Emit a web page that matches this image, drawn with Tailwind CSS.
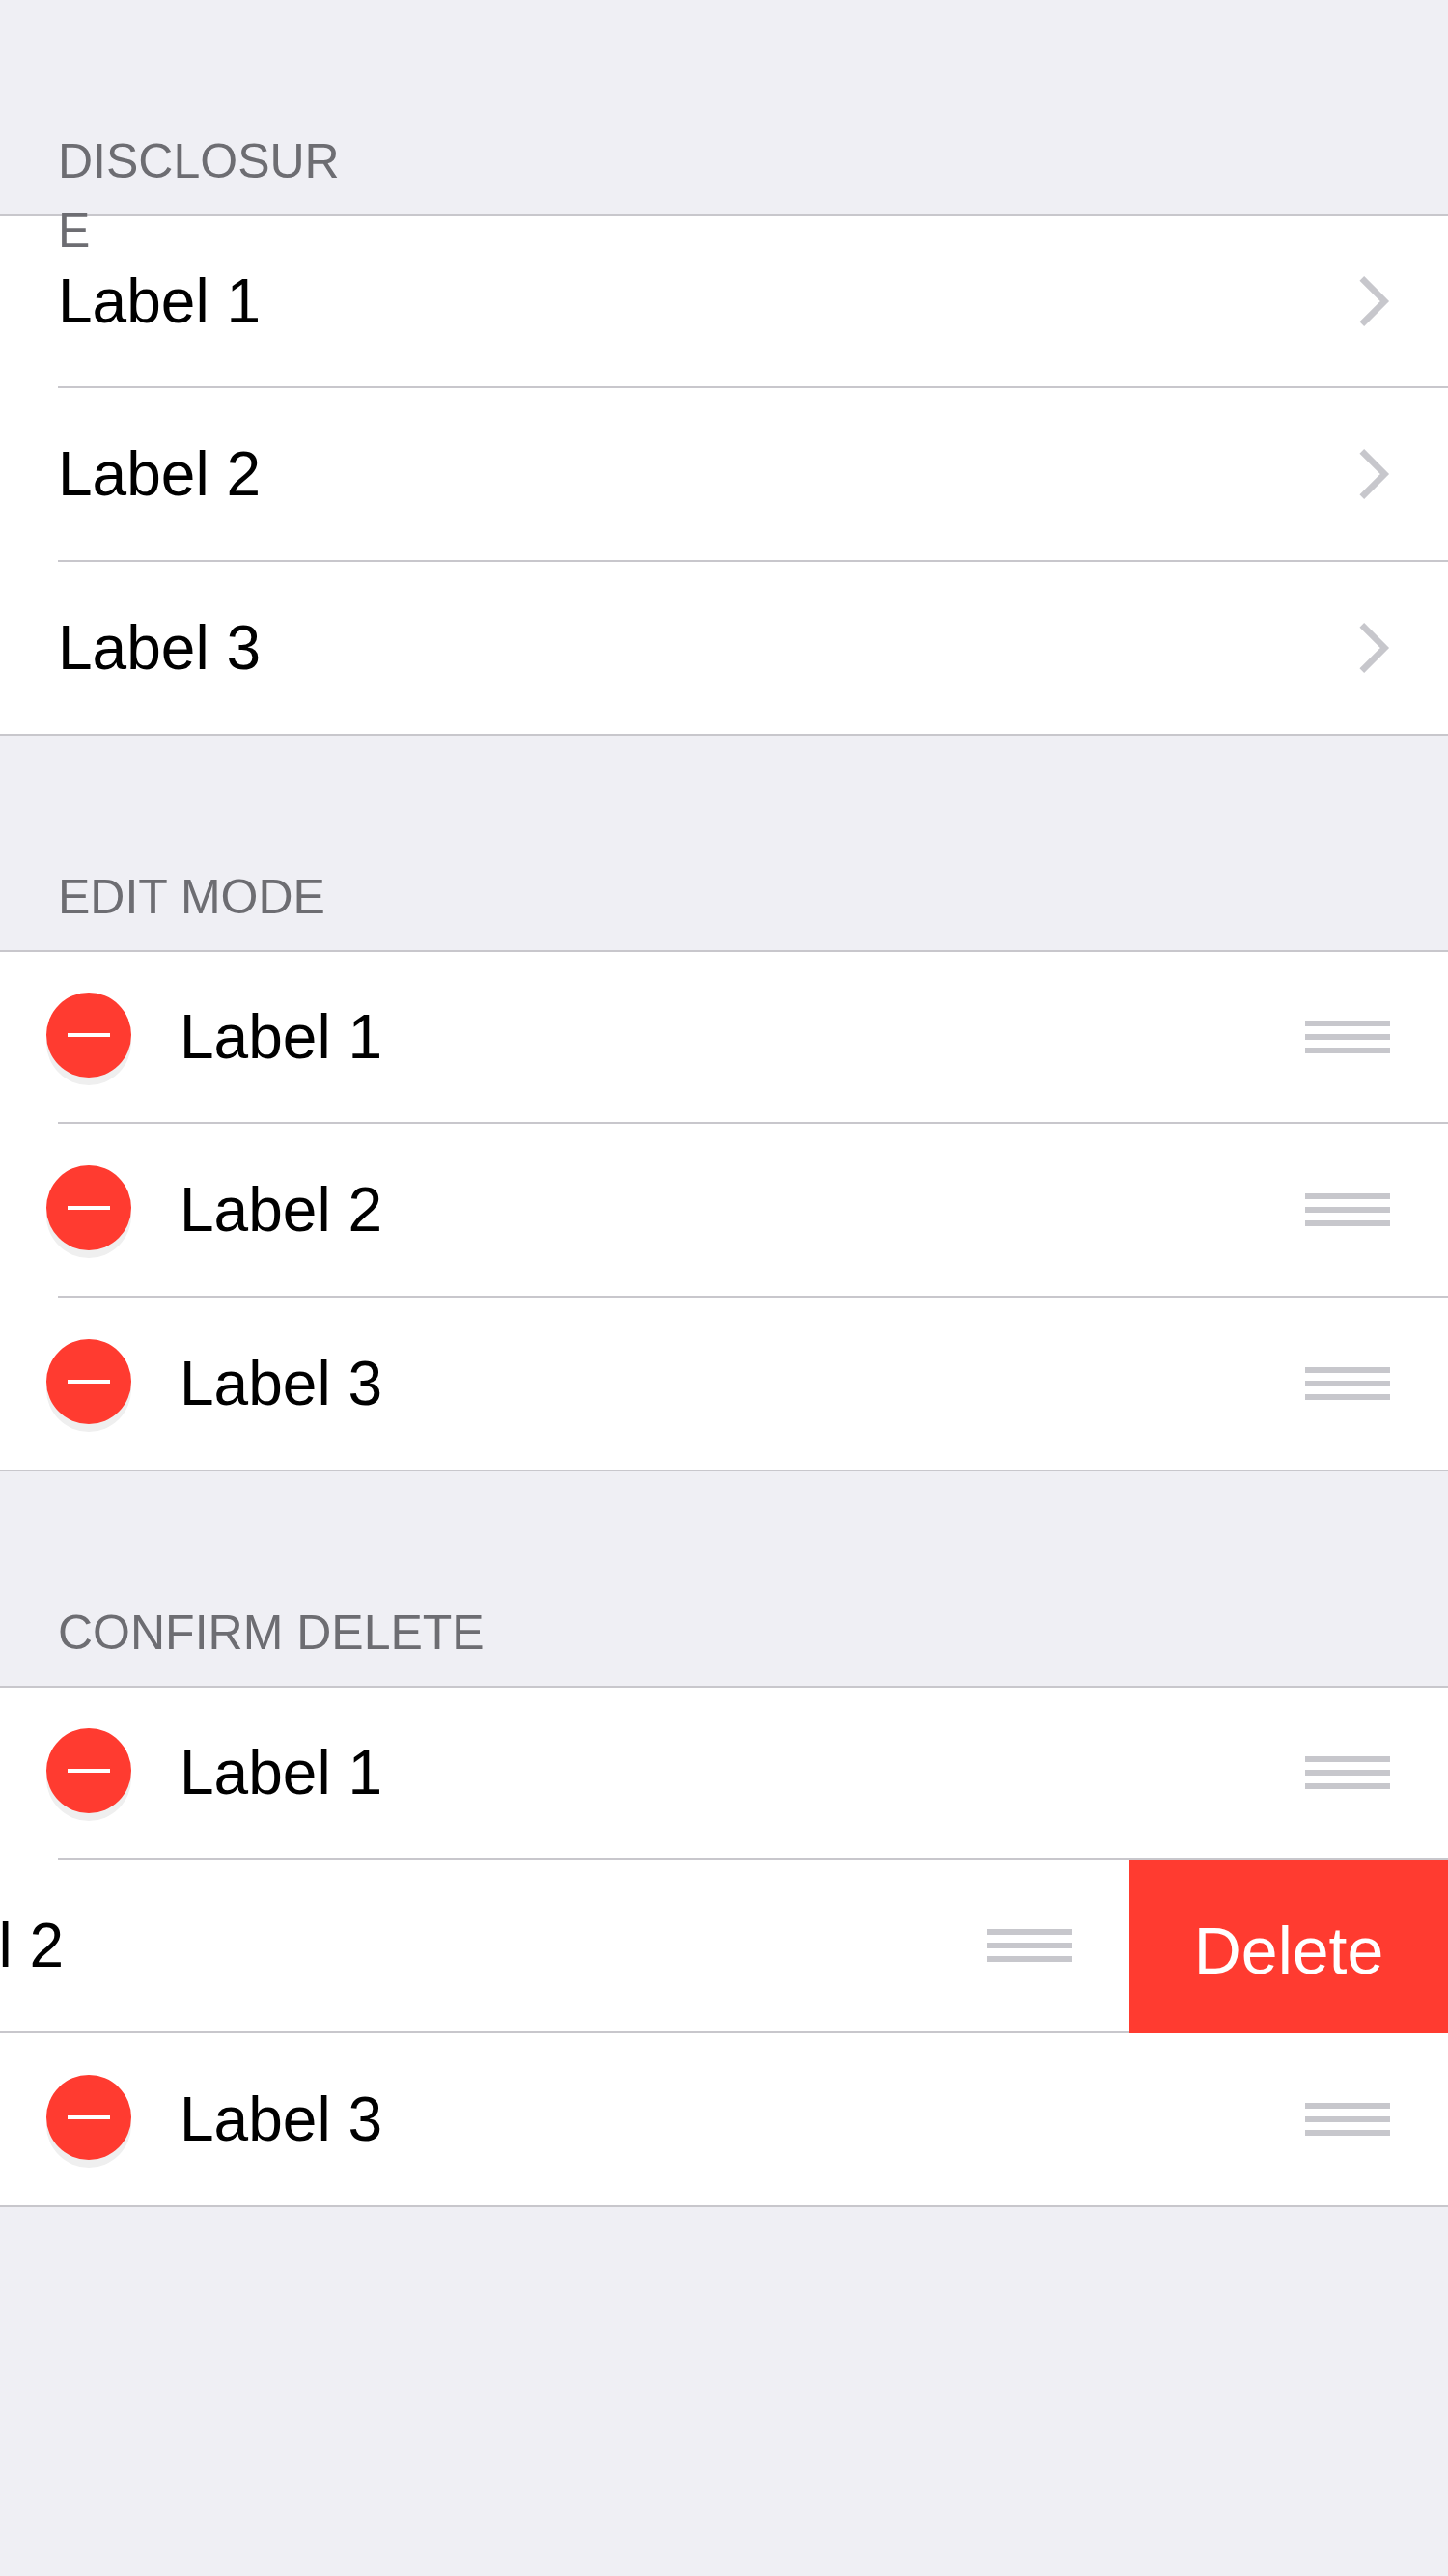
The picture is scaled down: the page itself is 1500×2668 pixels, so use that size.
<!DOCTYPE html>
<html lang="en">
<head>
<meta charset="utf-8">
<meta name="viewport" content="width=device-width, initial-scale=1">
<title>Table rows</title>
<script src="https://cdn.jsdelivr.net/npm/@tailwindcss/browser@4"></script>
</head>
<body class="min-h-screen overflow-x-hidden bg-[#efeff4] font-['Liberation_Sans',Arial,sans-serif] text-black">
<svg class="hidden" aria-hidden="true">
  <symbol id="chevron" viewBox="0 0 32 52"><path d="M2.8 2.4 26.4 26 2.8 49.6" fill="none" stroke="#c7c7cc" stroke-width="6.6"/></symbol>
  <symbol id="minus" viewBox="0 0 44 4"><path d="M0 0h44v4H0z" fill="#fff"/></symbol>
  <symbol id="grip" viewBox="0 0 88 34"><path d="M0 0h88v6H0zM0 14h88v6H0zM0 28h88v6H0z" fill="#c7c7cc"/></symbol>
</svg>
<main>
  <section>
    <header class="relative z-10 h-[222px] px-[60px] pt-[131px]">
      <h2 class="w-[300px] text-[50px] leading-[72px] break-words text-[#6d6d72]">DISCLOSURE</h2>
    </header>
    <ul class="border-y-2 border-[#c8c7cc] bg-white text-[64px] leading-none">
      <li>
        <a href="#" class="flex h-[176px] items-center justify-between px-[60px]">Label 1<svg class="h-[52px] w-8"><use href="#chevron"/></svg></a>
        <div class="ml-[60px] h-0.5 bg-[#c8c7cc]"></div>
      </li>
      <li>
        <a href="#" class="flex h-[178px] items-center justify-between px-[60px]">Label 2<svg class="h-[52px] w-8"><use href="#chevron"/></svg></a>
        <div class="ml-[60px] h-0.5 bg-[#c8c7cc]"></div>
      </li>
      <li>
        <a href="#" class="flex h-[178px] items-center justify-between px-[60px]">Label 3<svg class="h-[52px] w-8"><use href="#chevron"/></svg></a>
      </li>
    </ul>
  </section>

  <section>
    <header class="h-[222px] px-[60px] pt-[131px]">
      <h2 class="text-[50px] leading-[72px] text-[#6d6d72]">EDIT MODE</h2>
    </header>
    <ul class="border-y-2 border-[#c8c7cc] bg-white text-[64px] leading-none">
      <li>
        <div class="flex h-[176px] items-center pr-[60px] pl-12">
          <button type="button" aria-label="Remove Label 1" class="mb-1 flex size-[88px] items-center justify-center rounded-full bg-[#ff3b30] shadow-[0_8px_0_#efefef]"><svg class="h-1 w-11"><use href="#minus"/></svg></button>
          <span class="ml-[50px] flex-1">Label 1</span>
          <svg class="h-[34px] w-[88px]"><use href="#grip"/></svg>
        </div>
        <div class="ml-[60px] h-0.5 bg-[#c8c7cc]"></div>
      </li>
      <li>
        <div class="flex h-[178px] items-center pr-[60px] pl-12">
          <button type="button" aria-label="Remove Label 2" class="mb-1 flex size-[88px] items-center justify-center rounded-full bg-[#ff3b30] shadow-[0_8px_0_#efefef]"><svg class="h-1 w-11"><use href="#minus"/></svg></button>
          <span class="ml-[50px] flex-1">Label 2</span>
          <svg class="h-[34px] w-[88px]"><use href="#grip"/></svg>
        </div>
        <div class="ml-[60px] h-0.5 bg-[#c8c7cc]"></div>
      </li>
      <li>
        <div class="flex h-[178px] items-center pr-[60px] pl-12">
          <button type="button" aria-label="Remove Label 3" class="mb-1 flex size-[88px] items-center justify-center rounded-full bg-[#ff3b30] shadow-[0_8px_0_#efefef]"><svg class="h-1 w-11"><use href="#minus"/></svg></button>
          <span class="ml-[50px] flex-1">Label 3</span>
          <svg class="h-[34px] w-[88px]"><use href="#grip"/></svg>
        </div>
      </li>
    </ul>
  </section>

  <section>
    <header class="h-[222px] px-[60px] pt-[131px]">
      <h2 class="text-[50px] leading-[72px] text-[#6d6d72]">CONFIRM DELETE</h2>
    </header>
    <ul class="border-y-2 border-[#c8c7cc] bg-white text-[64px] leading-none">
      <li>
        <div class="flex h-[176px] items-center pr-[60px] pl-12">
          <button type="button" aria-label="Remove Label 1" class="mb-1 flex size-[88px] items-center justify-center rounded-full bg-[#ff3b30] shadow-[0_8px_0_#efefef]"><svg class="h-1 w-11"><use href="#minus"/></svg></button>
          <span class="ml-[50px] flex-1">Label 1</span>
          <svg class="h-[34px] w-[88px]"><use href="#grip"/></svg>
        </div>
        <div class="ml-[60px] h-0.5 bg-[#c8c7cc]"></div>
      </li>
      <!-- Row slid left to reveal its delete action -->
      <li class="flex overflow-hidden">
        <div class="-ml-[330px] w-full shrink-0">
          <div class="flex h-[178px] items-center pr-[60px] pl-12">
            <button type="button" aria-label="Remove Label 2" class="mb-1 flex size-[88px] items-center justify-center rounded-full bg-[#ff3b30] shadow-[0_8px_0_#efefef]"><svg class="h-1 w-11"><use href="#minus"/></svg></button>
            <span class="ml-[50px] flex-1">Label 2</span>
            <svg class="h-[34px] w-[88px]"><use href="#grip"/></svg>
          </div>
          <div class="ml-[60px] h-0.5 bg-[#c8c7cc]"></div>
        </div>
        <button type="button" class="w-[330px] shrink-0 bg-[#ff3b30] pt-2 text-[68px] text-white">Delete</button>
      </li>
      <li>
        <div class="flex h-[178px] items-center pr-[60px] pl-12">
          <button type="button" aria-label="Remove Label 3" class="mb-1 flex size-[88px] items-center justify-center rounded-full bg-[#ff3b30] shadow-[0_8px_0_#efefef]"><svg class="h-1 w-11"><use href="#minus"/></svg></button>
          <span class="ml-[50px] flex-1">Label 3</span>
          <svg class="h-[34px] w-[88px]"><use href="#grip"/></svg>
        </div>
      </li>
    </ul>
  </section>
</main>
</body>
</html>
